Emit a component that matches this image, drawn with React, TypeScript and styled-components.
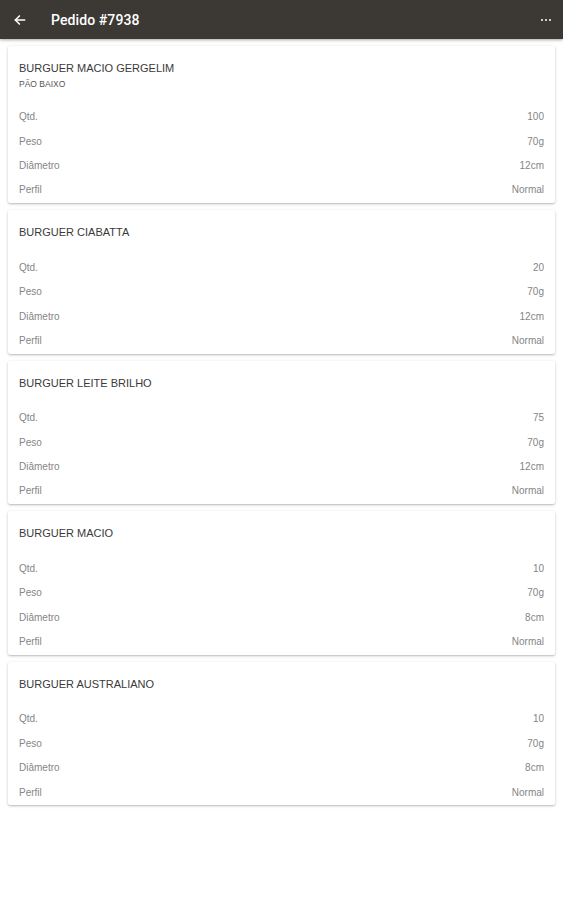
import styled, { createGlobalStyle } from "styled-components";

const GlobalStyle = createGlobalStyle`
  html, body {
    margin: 0;
    padding: 0;
    background: #fff;
    font-family: "Liberation Sans", Arial, sans-serif;
  }
`;

type Item = {
  name: string;
  note?: string;
  qtd: string;
  peso: string;
  diametro: string;
  perfil: string;
};

const items: Item[] = [
  { name: "BURGUER MACIO GERGELIM", note: "PÃO BAIXO", qtd: "100", peso: "70g", diametro: "12cm", perfil: "Normal" },
  { name: "BURGUER CIABATTA", qtd: "20", peso: "70g", diametro: "12cm", perfil: "Normal" },
  { name: "BURGUER LEITE BRILHO", qtd: "75", peso: "70g", diametro: "12cm", perfil: "Normal" },
  { name: "BURGUER MACIO", qtd: "10", peso: "70g", diametro: "8cm", perfil: "Normal" },
  { name: "BURGUER AUSTRALIANO", qtd: "10", peso: "70g", diametro: "8cm", perfil: "Normal" },
];

const App = () => {
  return (
    <Page>
      <GlobalStyle />
      <TopBar>
        <IconButton aria-label="Voltar">
          <svg width="14" height="14" viewBox="0 0 24 24" fill="none" stroke="#fff" strokeWidth="2.6" strokeLinecap="round" strokeLinejoin="round">
            <path d="M20 12H4" />
            <path d="M11 5l-7 7 7 7" />
          </svg>
        </IconButton>
        <Title>Pedido #7938</Title>
        <MoreButton aria-label="Mais">
          <Dot />
          <Dot />
          <Dot />
        </MoreButton>
      </TopBar>

      <List>
        {items.map((item, index) => (
          <Card key={index}>
            <CardHead hasNote={!!item.note}>
              <Name>{item.name}</Name>
              {item.note && <Note>{item.note}</Note>}
            </CardHead>
            <Row>
              <Label>Qtd.</Label>
              <Value>{item.qtd}</Value>
            </Row>
            <Row>
              <Label>Peso</Label>
              <Value>{item.peso}</Value>
            </Row>
            <Row>
              <Label>Diâmetro</Label>
              <Value>{item.diametro}</Value>
            </Row>
            <Row>
              <Label>Perfil</Label>
              <Value>{item.perfil}</Value>
            </Row>
          </Card>
        ))}
      </List>
    </Page>
  );
};

const Page = styled.div`
  min-height: 900px;
  background: #fff;
`;

const TopBar = styled.div`
  height: 39px;
  display: flex;
  align-items: center;
  background-color: #3c3935;
  box-shadow: 0 1px 3px rgba(0, 0, 0, 0.35);
  padding: 0 12px 0 13px;
  position: relative;
  z-index: 1;
`;

const IconButton = styled.div`
  display: flex;
  align-items: center;
  width: 14px;
  height: 14px;
  margin-top: 1px;
`;

const Title = styled.div`
  flex: 1;
  margin-left: 24px;
  color: #fff;
  font-family: Roboto, "Liberation Sans", Arial, sans-serif;
  font-size: 14px;
  font-weight: 500;
  letter-spacing: 0.1px;
`;

const MoreButton = styled.div`
  display: flex;
  gap: 1.5px;
  align-items: center;
  margin-top: 1px;
`;

const Dot = styled.span`
  width: 2.5px;
  height: 2.5px;
  border-radius: 50%;
  background: #fff;
`;

const List = styled.div`
  display: flex;
  flex-direction: column;
  gap: 7px;
  padding: 7px 8px 0 8px;
`;

const Card = styled.div`
  background: #fff;
  border-radius: 2px;
  box-shadow: 0 1px 3px rgba(0, 0, 0, 0.22), 0 1px 1px rgba(0, 0, 0, 0.08);
  padding: 0 11px 1px 11px;
`;

const CardHead = styled.div.withConfig({
  shouldForwardProp: (prop) => prop !== "hasNote",
})<{ hasNote: boolean }>`
  padding: 16px 0 ${(props) => (props.hasNote ? "15.5px" : "17px")} 0;
`;

const Name = styled.div`
  font-size: 11px;
  line-height: 12px;
  color: #3a3a3a;
`;

const Note = styled.div`
  margin-top: 5px;
  font-size: 8.5px;
  line-height: 10px;
  color: #555;
`;

const Row = styled.div`
  height: 24.4px;
  display: flex;
  align-items: center;
  justify-content: space-between;
  font-size: 10px;
  color: #858585;
`;

const Label = styled.span``;

const Value = styled.span``;

export default App;
